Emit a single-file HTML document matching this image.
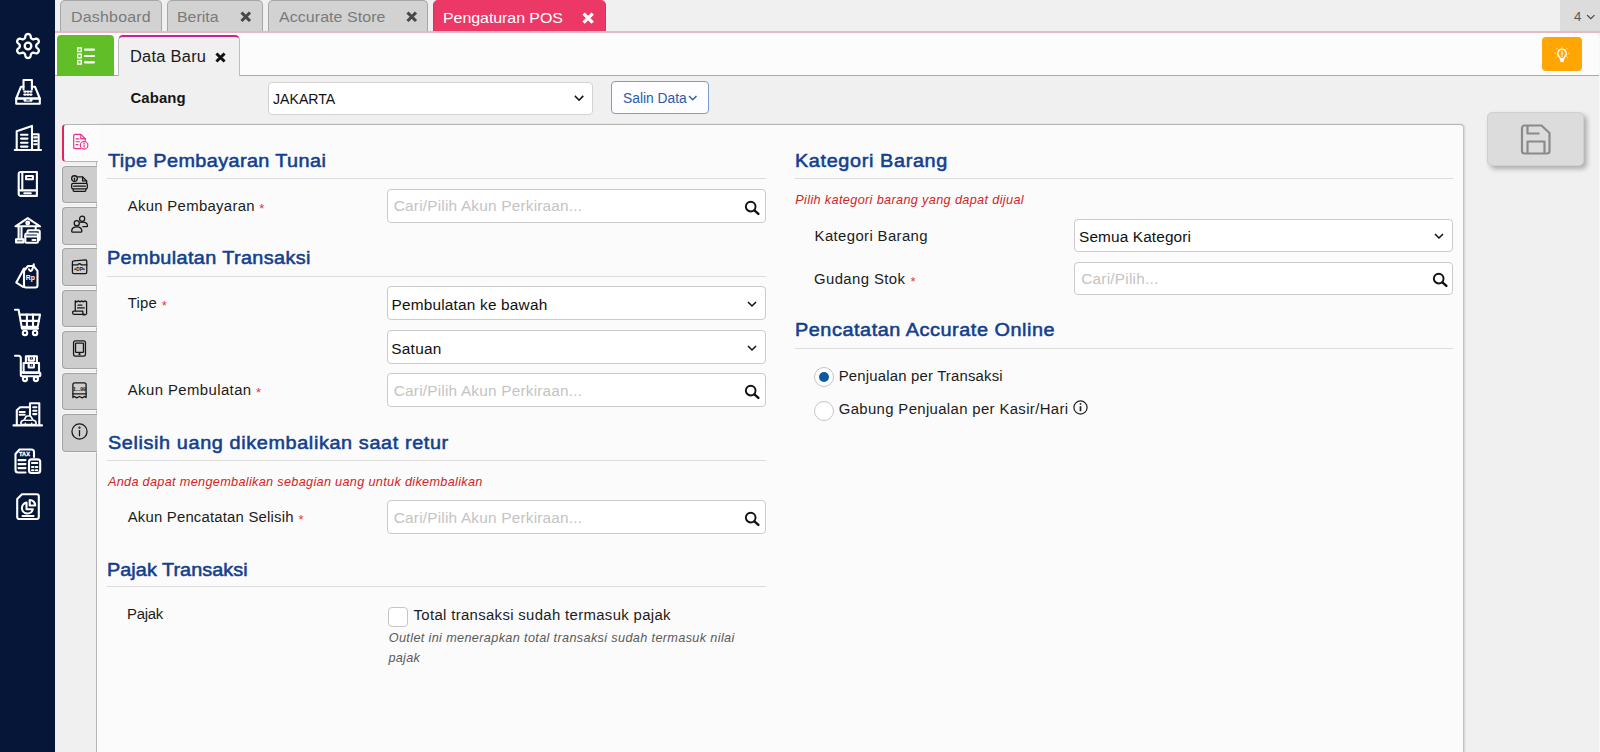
<!DOCTYPE html><html lang="id"><head><meta charset="utf-8"><title>Pengaturan POS</title><style>
*{box-sizing:border-box;margin:0;padding:0}
html,body{width:1600px;height:752px;overflow:hidden;background:#f0f0f0;font-family:"Liberation Sans",sans-serif}
.a{position:absolute}
.t{position:absolute;white-space:nowrap;line-height:1;font-family:"Liberation Sans",sans-serif}
#side{left:0;top:0;width:55px;height:752px;background:#051639}
#side svg{position:absolute;left:14px;width:28px;height:28px;overflow:visible}
#topbar{left:55px;top:0;width:1545px;height:32px;background:#f0f0f0}
.tab{position:absolute;top:0;height:32px;background:#d1d2d1;border:1px solid #a6a6a6;border-bottom:none;border-radius:5px 5px 0 0}
.tab.act{background:#ec3867;border-color:#d8335f;border-top-color:#ec3867}
#pinkline{left:55px;top:31.4px;width:1545px;height:1.4px;background:#e3bbc5}
#white{left:55px;top:33px;width:1543.5px;height:43px;background:#fcfcfc;border-bottom:1px solid #a9a9a9;border-radius:0 5px 0 0}
#rstrip{left:1598.5px;top:36px;width:1.5px;height:716px;background:#f7f7f7}
#green{left:57px;top:35px;width:57px;height:41px;background:#61be29;border-radius:4px 4px 0 0}
#dtab{left:118px;top:35px;width:122px;height:41px;background:#f0f0f0;border:1px solid #bdbdbd;border-bottom:none;border-top:2px solid #c8238a;border-radius:5px 5px 0 0}
#bulb{left:1542px;top:37px;width:40px;height:34px;background:#ffa604;border-radius:4px}
#four{left:1560px;top:0;width:40px;height:31px;background:#dcdcdc}
.inp{position:absolute;background:#fff;border:1px solid #cbcbcb;border-radius:4px}
.hr{position:absolute;height:1px;background:#dcdcdc}
#panel{left:96px;top:124px;width:1368px;height:640px;background:#fbfbfb;border:1px solid #b5b5b5;border-right-color:#c2c2c2;border-radius:0 4px 0 0;box-shadow:1px 0 2px rgba(0,0,0,.13)}
.vt{position:absolute;left:62px;width:35px;height:38px;background:#cccdcc;border:1px solid #a3a3a3;box-shadow:0 0 0 1px rgba(255,255,255,.45);border-right:none;border-radius:4px 0 0 4px}
.vt.act{background:#fcfcfc;box-shadow:none;border-color:#b5b5b5;border-left:2px solid #e0245e;width:36px}
.vt svg{position:absolute;left:8px;top:8.2px;width:17px;height:17px;overflow:visible}
#save{left:1487px;top:112px;width:97px;height:54px;background:#dcdcdc;border:1px solid #cfcfcf;border-radius:5px;box-shadow:3px 3px 5px rgba(0,0,0,.28)}
.ast{position:absolute;color:#e53935;font-size:13px;line-height:1;font-family:"Liberation Sans",sans-serif}
.chk{position:absolute;background:#fff;border:1px solid #c6c6c6}
</style></head><body>
<nav id="side" class="a">
<svg style="top:32px" viewBox="0 0 28 28"><path d="M14.00 2.00 L14.78 2.07 L15.54 2.33 L16.19 2.99 L16.61 4.24 L16.88 5.50 L17.22 6.21 L17.65 6.61 L18.10 6.90 L18.58 7.15 L19.13 7.31 L19.92 7.25 L21.14 6.86 L22.44 6.60 L23.34 6.83 L23.94 7.36 L24.39 8.00 L24.72 8.71 L24.88 9.49 L24.63 10.39 L23.76 11.39 L22.80 12.25 L22.36 12.90 L22.22 13.46 L22.20 14.00 L22.22 14.54 L22.36 15.10 L22.80 15.75 L23.76 16.61 L24.63 17.61 L24.88 18.51 L24.72 19.29 L24.39 20.00 L23.94 20.64 L23.34 21.17 L22.44 21.40 L21.14 21.14 L19.92 20.75 L19.13 20.69 L18.58 20.85 L18.10 21.10 L17.65 21.39 L17.22 21.79 L16.88 22.50 L16.61 23.76 L16.19 25.01 L15.54 25.67 L14.78 25.93 L14.00 26.00 L13.22 25.93 L12.46 25.67 L11.81 25.01 L11.39 23.76 L11.12 22.50 L10.78 21.79 L10.35 21.39 L9.90 21.10 L9.42 20.85 L8.87 20.69 L8.08 20.75 L6.86 21.14 L5.56 21.40 L4.66 21.17 L4.06 20.64 L3.61 20.00 L3.28 19.29 L3.12 18.51 L3.37 17.61 L4.24 16.61 L5.20 15.75 L5.64 15.10 L5.78 14.54 L5.80 14.00 L5.78 13.46 L5.64 12.90 L5.20 12.25 L4.24 11.39 L3.37 10.39 L3.12 9.49 L3.28 8.71 L3.61 8.00 L4.06 7.36 L4.66 6.83 L5.56 6.60 L6.86 6.86 L8.08 7.25 L8.87 7.31 L9.42 7.15 L9.90 6.90 L10.35 6.61 L10.78 6.21 L11.12 5.50 L11.39 4.24 L11.81 2.99 L12.46 2.33 L13.22 2.07Z" fill="none" stroke="#fff" stroke-width="2.3" stroke-linecap="round" stroke-linejoin="round"/><circle cx="14" cy="14" r="3.3" fill="none" stroke="#fff" stroke-width="2.3" stroke-linecap="round" stroke-linejoin="round"/></svg>
<svg style="top:78px" viewBox="0 0 28 28"><path d="M9.500 11.500V2h8.400v9.500" fill="none" stroke="#fff" stroke-width="2.1" stroke-linecap="round" stroke-linejoin="round"/><path d="M9.500 8.700H7L2.200 20.500h23.600L21 8.700h-3.100" fill="none" stroke="#fff" stroke-width="2.1" stroke-linecap="round" stroke-linejoin="round"/><path d="M2.200 20.500h23.600v5.200H2.200z" fill="none" stroke="#fff" stroke-width="2.1" stroke-linecap="round" stroke-linejoin="round"/><path d="M10 20.500h8v2.600h-8z" fill="#fff" stroke="#fff" stroke-width="1"/><path d="M12.300 22h3.400" stroke="#051639" stroke-width="1"/><path d="M10.300 13.600h1.200M13.300 13.600h1.200M16.300 13.600h1.200M10.300 16.600h1.200M13.300 16.600h1.200M16.300 16.600h1.200" fill="none" stroke="#fff" stroke-width="2.1" stroke-linecap="round" stroke-linejoin="round" stroke-width="1.700" stroke-linecap="butt"/></svg>
<svg style="top:124px" viewBox="0 0 28 28"><path d="M2.700 25.500V7.300L18 1.900v23.600" fill="none" stroke="#fff" stroke-width="2.1" stroke-linecap="round" stroke-linejoin="round"/><path d="M18 10.300h6.600v15.200" fill="none" stroke="#fff" stroke-width="2.1" stroke-linecap="round" stroke-linejoin="round"/><path d="M.7 26h26.300" fill="none" stroke="#fff" stroke-width="2.1" stroke-linecap="round" stroke-linejoin="round"/><path d="M7 10.800h6.500M7 14.600h6.500M7 18.800h6.500M7 22.600h6.500" fill="none" stroke="#fff" stroke-width="2.1" stroke-linecap="round" stroke-linejoin="round" stroke-linecap="butt"/><path d="M20.200 13.400h2.600M20.200 16.900h2.600M20.200 20.300h2.600" fill="none" stroke="#fff" stroke-width="2.1" stroke-linecap="round" stroke-linejoin="round" stroke-width="1.800" stroke-linecap="butt"/></svg>
<svg style="top:170px" viewBox="0 0 28 28"><path d="M6.700 2H22.900V25.900H6.700a2 2 0 0 1-2-2V4a2 2 0 0 1 2-2z" fill="none" stroke="#fff" stroke-width="2.1" stroke-linecap="round" stroke-linejoin="round"/><path d="M8.300 2v18.300" fill="none" stroke="#fff" stroke-width="2.1" stroke-linecap="round" stroke-linejoin="round"/><path d="M4.900 20.400h18" fill="none" stroke="#fff" stroke-width="2.1" stroke-linecap="round" stroke-linejoin="round"/><path d="M12.100 6h6.800v3.300h-6.800z" fill="none" stroke="#fff" stroke-width="2.1" stroke-linecap="round" stroke-linejoin="round" stroke-width="1.800"/><path d="M10.300 23.300h6.500" fill="none" stroke="#fff" stroke-width="2.1" stroke-linecap="round" stroke-linejoin="round" stroke-width="1.400" stroke-linecap="butt"/></svg>
<svg style="top:216px" viewBox="0 0 28 28"><path d="M1.500 10.300L13.700 2.200l12.300 8.100z" fill="none" stroke="#fff" stroke-width="2.1" stroke-linecap="round" stroke-linejoin="round"/><circle cx="13.700" cy="7" r="1.400" fill="none" stroke="#fff" stroke-width="2.1" stroke-linecap="round" stroke-linejoin="round" stroke-width="1.600"/><path d="M4.600 11.500v11M7.500 11.500v11" fill="none" stroke="#fff" stroke-width="2.1" stroke-linecap="round" stroke-linejoin="round"/><path d="M2 23.400h7.500v3H2z" fill="none" stroke="#fff" stroke-width="2.1" stroke-linecap="round" stroke-linejoin="round" stroke-width="1.700"/><path d="M21.700 11.500v2" fill="none" stroke="#fff" stroke-width="2.1" stroke-linecap="round" stroke-linejoin="round"/><path d="M13.500 17v-1.500a1.200 1.200 0 0 1 1.200-1.200h9.800a1.200 1.200 0 0 1 1.200 1.200v7.500a1.200 1.200 0 0 1-1.200 1.200" fill="none" stroke="#fff" stroke-width="2.1" stroke-linecap="round" stroke-linejoin="round" stroke-width="1.800"/><rect x="11.300" y="17.500" width="12.700" height="9.300" rx="1.300" fill="none" stroke="#fff" stroke-width="2.1" stroke-linecap="round" stroke-linejoin="round" stroke-width="1.900"/><path d="M11.300 20.500h12.700" fill="none" stroke="#fff" stroke-width="2.1" stroke-linecap="round" stroke-linejoin="round" stroke-width="1.800"/><path d="M18.500 24h3" fill="none" stroke="#fff" stroke-width="2.1" stroke-linecap="round" stroke-linejoin="round" stroke-width="1.500" stroke-linecap="butt"/></svg>
<svg style="top:262px" viewBox="0 0 28 28"><path d="M10 6.500L2.300 20.600l6.800 4.200" fill="none" stroke="#fff" stroke-width="2.1" stroke-linecap="round" stroke-linejoin="round"/><path d="M10 8.800L14 4h5.500l4 4.800v14.700a2 2 0 0 1-2 2H12a2 2 0 0 1-2-2z" fill="none" stroke="#fff" stroke-width="2.1" stroke-linecap="round" stroke-linejoin="round"/><path d="M15 7.300c.8 2 2.400 2 3.200.3.800-1.700 1.300-3.600 1.600-5.300" fill="none" stroke="#fff" stroke-width="2.1" stroke-linecap="round" stroke-linejoin="round" stroke-width="1.600"/><text x="16.300" y="18.300" text-anchor="middle" font-family="Liberation Sans, sans-serif" font-weight="700" font-size="6.800" fill="#fff">Rp</text></svg>
<svg style="top:308px" viewBox="0 0 28 28"><path d="M1 1.700h3.600L8 20.600h16" fill="none" stroke="#fff" stroke-width="2.1" stroke-linecap="round" stroke-linejoin="round"/><path d="M5.700 6.600H26l-2.300 12.300H8" fill="none" stroke="#fff" stroke-width="2.1" stroke-linecap="round" stroke-linejoin="round"/><path d="M12.900 6.600v12M19 6.600v12M6.800 12.900h18" fill="none" stroke="#fff" stroke-width="2.1" stroke-linecap="round" stroke-linejoin="round"/><circle cx="11" cy="24.900" r="2.200" fill="none" stroke="#fff" stroke-width="2.1" stroke-linecap="round" stroke-linejoin="round"/><circle cx="21.100" cy="24.900" r="2.200" fill="none" stroke="#fff" stroke-width="2.1" stroke-linecap="round" stroke-linejoin="round"/></svg>
<svg style="top:354px" viewBox="0 0 28 28"><path d="M1 1.700h3.300a2.500 2.500 0 0 1 2.500 2.500v14.400" fill="none" stroke="#fff" stroke-width="2.1" stroke-linecap="round" stroke-linejoin="round"/><rect x="6.800" y="18.600" width="19.500" height="3.700" rx="1" fill="none" stroke="#fff" stroke-width="2.1" stroke-linecap="round" stroke-linejoin="round"/><circle cx="11" cy="25" r="2.100" fill="none" stroke="#fff" stroke-width="2.1" stroke-linecap="round" stroke-linejoin="round"/><circle cx="21.900" cy="25" r="2.100" fill="none" stroke="#fff" stroke-width="2.1" stroke-linecap="round" stroke-linejoin="round"/><path d="M11.900 9V2.300h11V9" fill="none" stroke="#fff" stroke-width="2.1" stroke-linecap="round" stroke-linejoin="round"/><rect x="9.600" y="9" width="15.400" height="9.600" fill="none" stroke="#fff" stroke-width="2.1" stroke-linecap="round" stroke-linejoin="round"/><path d="M14.700 2.300v4.300h5.200V2.300M14.700 9v4.500h5.200V9" fill="none" stroke="#fff" stroke-width="2.1" stroke-linecap="round" stroke-linejoin="round" stroke-width="1.700"/><circle cx="17.300" cy="4.200" r=".6" fill="#fff"/><circle cx="17.300" cy="11.200" r=".6" fill="#fff"/></svg>
<svg style="top:400px" viewBox="0 0 28 28"><path d="M2.800 25V10.200l3.300-2.900h9.900" fill="none" stroke="#fff" stroke-width="2.1" stroke-linecap="round" stroke-linejoin="round"/><path d="M16 25V3.300h9.300V25" fill="none" stroke="#fff" stroke-width="2.1" stroke-linecap="round" stroke-linejoin="round"/><path d="M-.5 25.400h28.500" fill="none" stroke="#fff" stroke-width="2.1" stroke-linecap="round" stroke-linejoin="round"/><path d="M19.200 7.300h3.200M19.200 10.800h3.200M19.200 14.100h3.200" fill="none" stroke="#fff" stroke-width="2.1" stroke-linecap="round" stroke-linejoin="round" stroke-width="1.700" stroke-linecap="butt"/><path d="M5.700 12h5M5.700 14.800h5" fill="none" stroke="#fff" stroke-width="2.1" stroke-linecap="round" stroke-linejoin="round" stroke-width="1.700" stroke-linecap="butt"/><path d="M7.600 24.500c-1-.5-1-2.800.6-3.700l2-.8 1.800-3.300c.3-.5.800-.7 1.300-.7h2.400c.5 0 1 .2 1.300.7l1.800 3.300 2 .8c1.600.9 1.600 3.200.6 3.700z" fill="#051639" stroke="#fff" stroke-width="1.700" stroke-linejoin="round"/><path d="M11 20.300h7" stroke="#fff" stroke-width="1.300"/><circle cx="11.300" cy="23.300" r=".8" fill="#fff"/><circle cx="17.700" cy="23.300" r=".8" fill="#fff"/></svg>
<svg style="top:446px" viewBox="0 0 28 28"><path d="M11.500 26.500H4a2.500 2.500 0 0 1-2.500-2.500V8L5.500 3.500H17.500a2.500 2.500 0 0 1 2.500 2.500v5" fill="none" stroke="#fff" stroke-width="2.1" stroke-linecap="round" stroke-linejoin="round"/><path d="M4.500 14.100h7M4.500 18.100h7M4.500 22.100h7" fill="none" stroke="#fff" stroke-width="2.1" stroke-linecap="round" stroke-linejoin="round" stroke-linecap="butt"/><rect x="15" y="13.400" width="11.200" height="13.600" rx="2.500" fill="none" stroke="#fff" stroke-width="2.1" stroke-linecap="round" stroke-linejoin="round"/><path d="M18 17h5.300" fill="none" stroke="#fff" stroke-width="2.1" stroke-linecap="round" stroke-linejoin="round" stroke-width="1.700" stroke-linecap="butt"/><path d="M18 21h1.500M21.800 21h1.500M18 24.200h1.500M21.800 24.200h1.500" fill="none" stroke="#fff" stroke-width="2.1" stroke-linecap="round" stroke-linejoin="round" stroke-width="1.600" stroke-linecap="butt"/><text x="10.500" y="10.300" text-anchor="middle" font-family="Liberation Sans, sans-serif" font-weight="700" font-size="5.600" fill="#fff" stroke="#fff" stroke-width=".3">TAX</text></svg>
<svg style="top:493px" viewBox="0 0 28 28"><path d="M3.200 6L8 1.300h14.800a2 2 0 0 1 2 2V24a2 2 0 0 1-2 2H5.200a2 2 0 0 1-2-2z" fill="none" stroke="#fff" stroke-width="2.1" stroke-linecap="round" stroke-linejoin="round"/><path d="M12.500 9.600a5.500 5.500 0 1 0 6.300 6.600h-6.300z" fill="none" stroke="#fff" stroke-width="2.1" stroke-linecap="round" stroke-linejoin="round"/><path d="M15.700 7a5.500 5.500 0 0 1 5.500 5.500h-5.500z" fill="none" stroke="#fff" stroke-width="2.1" stroke-linecap="round" stroke-linejoin="round" stroke-width="1.800"/><path d="M8.500 23h11" fill="none" stroke="#fff" stroke-width="2.1" stroke-linecap="round" stroke-linejoin="round" stroke-width="1.700" stroke-linecap="butt"/></svg>
</nav>
<div id="topbar" class="a"></div>
<div id="four" class="a"></div>
<div class="tab" style="left:60px;width:102px"></div>
<div class="tab" style="left:167px;width:96px"></div>
<div class="tab" style="left:268px;width:160px"></div>
<div class="tab act" style="left:433px;width:173px"></div>
<div id="pinkline" class="a"></div>
<div id="white" class="a"></div><div id="rstrip" class="a"></div>
<svg class="a" style="left:239.8px;top:11.3px;width:11.5px;height:11.5px;overflow:visible" viewBox="0 0 10 10"><path d="M1.300 1.300L8.700 8.700M8.700 1.300L1.300 8.700" stroke="#484848" stroke-width="2.700" stroke-linecap="butt"/></svg>
<svg class="a" style="left:405.5px;top:11.3px;width:11.5px;height:11.5px;overflow:visible" viewBox="0 0 10 10"><path d="M1.300 1.300L8.700 8.700M8.700 1.300L1.300 8.700" stroke="#484848" stroke-width="2.700" stroke-linecap="butt"/></svg>
<svg class="a" style="left:582.3px;top:11.5px;width:12.3px;height:12.3px;overflow:visible" viewBox="0 0 10 10"><path d="M1.300 1.300L8.700 8.700M8.700 1.300L1.300 8.700" stroke="#fff" stroke-width="2.700" stroke-linecap="butt"/></svg>
<svg class="a" style="left:1587.4px;top:15px;width:7.6px;height:4.3px;overflow:visible" viewBox="0 0 7.6 4.3"><path d="M.5 .5L3.8 3.5999999999999996L7.1 .5" fill="none" stroke="#444" stroke-width="1.15" stroke-linecap="square" stroke-linejoin="miter"/></svg>
<div id="green" class="a"><svg class="a" style="left:20px;top:12px;width:19px;height:18px" viewBox="0 0 19 18"><g fill="none" stroke="#fff" stroke-width="1.400"><rect x=".7" y=".9" width="3.600" height="3.600"/><rect x=".7" y="7.200" width="3.600" height="3.600"/><rect x=".7" y="13.500" width="3.600" height="3.600"/></g><g stroke="#fff" stroke-width="2.200" stroke-linecap="round"><path d="M8 2.700h9M8 9h9M8 15.300h9"/></g></svg></div>
<div id="dtab" class="a"></div>
<svg class="a" style="left:214.8px;top:51.8px;width:11px;height:11px;overflow:visible" viewBox="0 0 10 10"><path d="M1.300 1.300L8.700 8.700M8.700 1.300L1.300 8.700" stroke="#111" stroke-width="2.700" stroke-linecap="butt"/></svg>
<div id="bulb" class="a"><svg class="a" style="left:12px;top:9px;width:16px;height:18px;overflow:visible" viewBox="0 0 16 18"><path d="M8 3.200a4.300 4.300 0 0 0-2.600 7.700c.6.500.9 1 .9 1.700h3.400c0-.7.300-1.200.9-1.700A4.300 4.300 0 0 0 8 3.200z" fill="none" stroke="#fff" stroke-width="1.300"/><path d="M6.200 13.400h3.600l-.6 2.300H6.800z" fill="#fff" stroke="#fff" stroke-width=".8" stroke-linejoin="round"/><path d="M8 5.500v3.200" stroke="#fff" stroke-width="1.200" stroke-linecap="round"/><circle cx="8" cy="10.300" r=".7" fill="#fff"/><g stroke="#ffe0a0" stroke-width=".9" stroke-linecap="round"><path d="M8 .3v1.200M2.600 2.300l.9.900M13.400 2.300l-.9.900M.6 7.300h1.200M14.200 7.300h1.200M2.300 11.500l.9-.6M13.700 11.500l-.9-.6"/></g></svg></div>
<div class="inp" style="left:268px;top:81.500px;width:324.500px;height:33px;border-color:#d3d3d3"></div>
<svg class="a" style="left:575px;top:96.2px;width:8.2px;height:4.9px;overflow:visible" viewBox="0 0 8.2 4.9"><path d="M.5 .5L4.1 4.2L7.699999999999999 .5" fill="none" stroke="#111" stroke-width="1.6" stroke-linecap="square" stroke-linejoin="miter"/></svg>
<div class="inp" style="left:611px;top:81px;width:98px;height:33px;border-color:#7f9bc8;background:#fdfdff"></div>
<svg class="a" style="left:689px;top:95.5px;width:7.5px;height:4.5px;overflow:visible" viewBox="0 0 7.5 4.5"><path d="M.5 .5L3.75 3.8L7.0 .5" fill="none" stroke="#2b5ca8" stroke-width="1.4" stroke-linecap="square" stroke-linejoin="miter"/></svg>
<div id="panel" class="a"></div>
<div class="vt act" style="top:124px"><svg viewBox="0 0 18 18" style="left:8px;top:8px;width:17px;height:17px"><path d="M9 16.500H3.300a1.500 1.500 0 0 1-1.500-1.500V3a1.500 1.500 0 0 1 1.500-1.500h6.200L14 6v2.500" fill="none" stroke="#e8308a" stroke-width="1.25" stroke-linecap="round" stroke-linejoin="round"/><path d="M9.300 1.800V6H14" fill="none" stroke="#e8308a" stroke-width="1.25" stroke-linecap="round" stroke-linejoin="round"/><path d="M4.300 6.200h3M4.300 9.300h3.500M4.300 12.400h2" fill="none" stroke="#e8308a" stroke-width="1.25" stroke-linecap="round" stroke-linejoin="round"/><circle cx="12.800" cy="13" r="4" fill="none" stroke="#e8308a" stroke-width="1.25" stroke-linecap="round" stroke-linejoin="round"/><path d="M12.800 12.600v2.300" fill="none" stroke="#e8308a" stroke-width="1.25" stroke-linecap="round" stroke-linejoin="round"/><circle cx="12.800" cy="10.900" r="0.300" fill="none" stroke="#e8308a" stroke-width="1.25" stroke-linecap="round" stroke-linejoin="round"/></svg></div>
<div class="vt" style="top:165.5px;height:37.500px"><svg viewBox="0 0 18 18"><path d="M7.300 2H12.300L16.600 6.300V8.800" fill="none" stroke="#161616" stroke-width="1.35" stroke-linecap="round" stroke-linejoin="round"/><path d="M12.300 2.200V6.300H16.400" fill="none" stroke="#161616" stroke-width="1.35" stroke-linecap="round" stroke-linejoin="round"/><circle cx="3.700" cy="3.800" r="3" fill="none" stroke="#161616" stroke-width="1.35" stroke-linecap="round" stroke-linejoin="round"/><path d="M3.700 3.400v2" fill="none" stroke="#161616" stroke-width="1.35" stroke-linecap="round" stroke-linejoin="round" stroke-width="1.100"/><rect x=".7" y="8.900" width="16.600" height="5.800" rx="1.500" fill="none" stroke="#161616" stroke-width="1.35" stroke-linecap="round" stroke-linejoin="round"/><path d="M2.800 11.800h12.400" fill="none" stroke="#161616" stroke-width="1.35" stroke-linecap="round" stroke-linejoin="round" stroke-width="1.700" stroke-linecap="butt"/><path d="M2.300 15v1.500a.9.900 0 0 0 .9.900H14.800a.9.900 0 0 0 .9-.9V15" fill="none" stroke="#161616" stroke-width="1.35" stroke-linecap="round" stroke-linejoin="round"/></svg></div>
<div class="vt" style="top:207px;height:37.500px"><svg viewBox="0 0 18 18"><circle cx="11.800" cy="2.900" r="2.700" fill="none" stroke="#161616" stroke-width="1.35" stroke-linecap="round" stroke-linejoin="round"/><path d="M10.300 6.900c4-1.400 7.200.6 7.200 3.600a.8.800 0 0 1-.8.800h-4.200" fill="none" stroke="#161616" stroke-width="1.35" stroke-linecap="round" stroke-linejoin="round"/><circle cx="6.100" cy="7.600" r="2.700" fill="none" stroke="#161616" stroke-width="1.35" stroke-linecap="round" stroke-linejoin="round"/><path d="M.7 16.200c0-2.900 2.300-4.700 5.400-4.700s5.400 1.800 5.400 4.700a.8.800 0 0 1-.8.800H1.500a.8.800 0 0 1-.8-.8z" fill="none" stroke="#161616" stroke-width="1.35" stroke-linecap="round" stroke-linejoin="round"/></svg></div>
<div class="vt" style="top:248.4px;height:37.500px"><svg viewBox="0 0 18 18"><path d="M1.500 4.500a1.500 1.500 0 0 1 1.500-1.500L15.500 2a1.200 1.200 0 0 1 1.200 1.200V15a1.500 1.500 0 0 1-1.500 1.500H3A1.500 1.500 0 0 1 1.500 15z" fill="none" stroke="#161616" stroke-width="1.35" stroke-linecap="round" stroke-linejoin="round"/><path d="M1.500 7.300h5.700c.3-1.600 3.300-1.600 3.600 0h5.900" fill="none" stroke="#161616" stroke-width="1.35" stroke-linecap="round" stroke-linejoin="round"/><path d="M4 11.800h1.200M12.800 11.800H14" fill="none" stroke="#161616" stroke-width="1.35" stroke-linecap="round" stroke-linejoin="round" stroke-width="1.800"/><text x="9" y="13.700" text-anchor="middle" font-family="Liberation Sans, sans-serif" font-weight="700" font-size="5" fill="#161616">DP</text></svg></div>
<div class="vt" style="top:289.9px;height:37.500px"><svg viewBox="0 0 18 18"><path d="M4.500 12.500V2l1.700 1 1.700-1 1.700 1 1.700-1 1.700 1 1.700-1 1.800 1v12a1.800 1.800 0 0 1-1.800 1.800h-2" fill="none" stroke="#161616" stroke-width="1.35" stroke-linecap="round" stroke-linejoin="round"/><path d="M7.500 6.500h4M7 9.500h7" fill="none" stroke="#161616" stroke-width="1.35" stroke-linecap="round" stroke-linejoin="round"/><path d="M2.800 12.800h9.700v1.700a1.800 1.800 0 0 0 1.800 1.800H3.500a1.800 1.800 0 0 1-1.800-1.800v-.6a1.100 1.100 0 0 1 1.100-1.100z" fill="none" stroke="#161616" stroke-width="1.35" stroke-linecap="round" stroke-linejoin="round"/></svg></div>
<div class="vt" style="top:331.3px;height:37.500px"><svg viewBox="0 0 18 18"><rect x="2.700" y="1" width="12.600" height="16" rx="2" fill="none" stroke="#161616" stroke-width="1.35" stroke-linecap="round" stroke-linejoin="round"/><rect x="4.800" y="3.200" width="8.400" height="9.800" rx=".6" fill="none" stroke="#161616" stroke-width="1.35" stroke-linecap="round" stroke-linejoin="round"/><circle cx="9" cy="15" r=".5" fill="none" stroke="#161616" stroke-width="1.35" stroke-linecap="round" stroke-linejoin="round"/></svg></div>
<div class="vt" style="top:372.8px;height:37.500px"><svg viewBox="0 0 18 18"><path d="M2 16.500V3a2 2 0 0 1 2-2h10a2 2 0 0 1 2 2v13.500l-1.700-1.200-2.400 1.500-2.900-1.500-2.900 1.500-2.400-1.500z" fill="none" stroke="#161616" stroke-width="1.35" stroke-linecap="round" stroke-linejoin="round"/><path d="M2 12.500h14" fill="none" stroke="#161616" stroke-width="1.35" stroke-linecap="round" stroke-linejoin="round" stroke-width="1.800"/><text x="9" y="9.800" text-anchor="middle" font-family="Liberation Sans, sans-serif" font-weight="700" font-size="5.500" fill="#161616">1...99</text></svg></div>
<div class="vt" style="top:414.2px;height:37.500px"><svg viewBox="0 0 18 18"><circle cx="9" cy="9" r="8" fill="none" stroke="#161616" stroke-width="1.35" stroke-linecap="round" stroke-linejoin="round"/><path d="M9 8v5.500" fill="none" stroke="#161616" stroke-width="1.35" stroke-linecap="round" stroke-linejoin="round"/><circle cx="9" cy="5" r=".5" fill="none" stroke="#161616" stroke-width="1.35" stroke-linecap="round" stroke-linejoin="round" fill="#161616"/></svg></div>
<div id="save" class="a"><svg class="a" style="left:32px;top:11px;width:31px;height:31px" viewBox="0 0 31 31"><g fill="none" stroke="#8a8a8a" stroke-width="2.200" stroke-linejoin="round"><path d="M4.500 1.500h17l8 7.500v18a2.500 2.500 0 0 1-2.500 2.500h-22.500a2.500 2.500 0 0 1-2.500-2.500v-23a2.500 2.500 0 0 1 2.500-2.500z"/><path d="M7.500 1.500v8h12"/><path d="M7.500 29.500v-12h17v12"/></g></svg></div>
<div class="hr" style="left:107px;top:178px;width:659px"></div>
<div class="hr" style="left:107px;top:275.5px;width:659px"></div>
<div class="hr" style="left:107px;top:460px;width:659px"></div>
<div class="hr" style="left:107px;top:586.3px;width:659px"></div>
<div class="hr" style="left:795px;top:178px;width:658px"></div>
<div class="hr" style="left:795px;top:348.2px;width:658px"></div>
<div class="inp" style="left:387px;top:188.5px;width:379px;height:34px"></div>
<div class="inp" style="left:387px;top:286px;width:379px;height:34.3px"></div>
<div class="inp" style="left:387px;top:330px;width:379px;height:33.7px"></div>
<div class="inp" style="left:387px;top:373.1px;width:379px;height:33.8px"></div>
<div class="inp" style="left:387px;top:500px;width:379px;height:34px"></div>
<div class="inp" style="left:1074px;top:218.5px;width:379px;height:33px"></div>
<div class="inp" style="left:1074px;top:262px;width:379px;height:33.4px"></div>
<svg class="a" style="left:745px;top:200.5px;width:14px;height:14px;overflow:visible" viewBox="0 0 14 14"><circle cx="5.700" cy="5.600" r="4.850" fill="none" stroke="#111" stroke-width="1.900"/><path d="M9.400 9.300L13.400 12.900" stroke="#111" stroke-width="2.400" stroke-linecap="round"/></svg>
<svg class="a" style="left:745px;top:385px;width:14px;height:14px;overflow:visible" viewBox="0 0 14 14"><circle cx="5.700" cy="5.600" r="4.850" fill="none" stroke="#111" stroke-width="1.900"/><path d="M9.400 9.300L13.400 12.900" stroke="#111" stroke-width="2.400" stroke-linecap="round"/></svg>
<svg class="a" style="left:745px;top:511.7px;width:14px;height:14px;overflow:visible" viewBox="0 0 14 14"><circle cx="5.700" cy="5.600" r="4.850" fill="none" stroke="#111" stroke-width="1.900"/><path d="M9.400 9.300L13.400 12.900" stroke="#111" stroke-width="2.400" stroke-linecap="round"/></svg>
<svg class="a" style="left:1432.5px;top:273px;width:14px;height:14px;overflow:visible" viewBox="0 0 14 14"><circle cx="5.700" cy="5.600" r="4.850" fill="none" stroke="#111" stroke-width="1.900"/><path d="M9.400 9.300L13.400 12.900" stroke="#111" stroke-width="2.400" stroke-linecap="round"/></svg>
<svg class="a" style="left:747.6px;top:302px;width:8px;height:4.7px;overflow:visible" viewBox="0 0 8 4.7"><path d="M.5 .5L4.0 4.0L7.5 .5" fill="none" stroke="#111" stroke-width="1.5" stroke-linecap="square" stroke-linejoin="miter"/></svg>
<svg class="a" style="left:747.6px;top:345.6px;width:8px;height:4.7px;overflow:visible" viewBox="0 0 8 4.7"><path d="M.5 .5L4.0 4.0L7.5 .5" fill="none" stroke="#111" stroke-width="1.5" stroke-linecap="square" stroke-linejoin="miter"/></svg>
<svg class="a" style="left:1435.1px;top:234.2px;width:8px;height:4.7px;overflow:visible" viewBox="0 0 8 4.7"><path d="M.5 .5L4.0 4.0L7.5 .5" fill="none" stroke="#111" stroke-width="1.5" stroke-linecap="square" stroke-linejoin="miter"/></svg>
<div class="chk" style="left:388px;top:607px;width:19.500px;height:19.500px;border-radius:4px"></div>
<div class="chk" style="left:814px;top:367.100px;width:20px;height:20px;border-radius:50%"></div>
<div class="a" style="left:818.700px;top:371.900px;width:10.600px;height:10.600px;border-radius:50%;background:#0c59a6"></div>
<div class="chk" style="left:814px;top:401.200px;width:20px;height:20px;border-radius:50%"></div>
<svg class="a" style="left:1073.400px;top:400.400px;width:15px;height:15px;overflow:visible" viewBox="0 0 15 15"><circle cx="7.500" cy="7.500" r="6.600" fill="none" stroke="#222" stroke-width="1.250"/><path d="M7.500 6.200v5" stroke="#222" stroke-width="1.700" stroke-linecap="butt"/><circle cx="7.500" cy="3.900" r=".95" fill="#222"/></svg>
<span class="ast" style="left:259.2px;top:201.5px">*</span>
<span class="ast" style="left:161.8px;top:299px">*</span>
<span class="ast" style="left:256px;top:385.5px">*</span>
<span class="ast" style="left:298.5px;top:512.5px">*</span>
<span class="ast" style="left:910.4px;top:274.5px">*</span>
<span class="t" style="left:70.86px;top:8.99px;font-size:15.3px;letter-spacing:0.226px;color:#7a7a7a;font-weight:400;font-style:normal;transform:scaleX(1.04);transform-origin:0 0;">Dashboard</span>
<span class="t" style="left:177.46px;top:8.99px;font-size:15.3px;letter-spacing:-0.012px;color:#7a7a7a;font-weight:400;font-style:normal;transform:scaleX(1.04);transform-origin:0 0;">Berita</span>
<span class="t" style="left:278.75px;top:8.99px;font-size:15.3px;letter-spacing:0.089px;color:#7a7a7a;font-weight:400;font-style:normal;transform:scaleX(1.04);transform-origin:0 0;">Accurate Store</span>
<span class="t" style="left:442.72px;top:9.83px;font-size:15.5px;letter-spacing:-0.055px;color:#ffffff;font-weight:400;font-style:normal;transform:scaleX(1.03);transform-origin:0 0;">Pengaturan POS</span>
<span class="t" style="left:1574.00px;top:9.78px;font-size:13.2px;letter-spacing:0px;color:#555;font-weight:400;font-style:normal;">4</span>
<span class="t" style="left:129.56px;top:48.57px;font-size:15.8px;letter-spacing:0.245px;color:#1a1a1a;font-weight:400;font-style:normal;transform:scaleX(1.04);transform-origin:0 0;">Data Baru</span>
<span class="t" style="left:130.50px;top:91.34px;font-size:14.9px;letter-spacing:0.1px;color:#151515;font-weight:700;font-style:normal;">Cabang</span>
<span class="t" style="left:272.60px;top:90.91px;font-size:15.4px;letter-spacing:0px;color:#111;font-weight:400;font-style:normal;transform:scaleX(0.9176);transform-origin:0 0;">JAKARTA</span>
<span class="t" style="left:623.47px;top:91.34px;font-size:14.9px;letter-spacing:0px;color:#2b5ca8;font-weight:400;font-style:normal;transform:scaleX(0.9279);transform-origin:0 0;">Salin Data</span>
<h2 class="t" style="left:108.10px;top:151.94px;font-size:18.9px;letter-spacing:0.379px;color:#123f8e;font-weight:400;font-style:normal;-webkit-text-stroke:0.55px #123f8e;transform:scaleX(1.05);transform-origin:0 0;">Tipe Pembayaran Tunai</h2>
<h2 class="t" style="left:107.45px;top:248.94px;font-size:18.9px;letter-spacing:0.363px;color:#123f8e;font-weight:400;font-style:normal;-webkit-text-stroke:0.55px #123f8e;transform:scaleX(1.05);transform-origin:0 0;">Pembulatan Transaksi</h2>
<h2 class="t" style="left:108.00px;top:433.94px;font-size:18.9px;letter-spacing:0.586px;color:#123f8e;font-weight:400;font-style:normal;-webkit-text-stroke:0.55px #123f8e;transform:scaleX(1.05);transform-origin:0 0;">Selisih uang dikembalikan saat retur</h2>
<h2 class="t" style="left:107.20px;top:560.93px;font-size:18.9px;letter-spacing:0.044px;color:#123f8e;font-weight:400;font-style:normal;-webkit-text-stroke:0.55px #123f8e;transform:scaleX(1.05);transform-origin:0 0;">Pajak Transaksi</h2>
<h2 class="t" style="left:794.55px;top:151.94px;font-size:18.9px;letter-spacing:0.605px;color:#123f8e;font-weight:400;font-style:normal;-webkit-text-stroke:0.55px #123f8e;transform:scaleX(1.05);transform-origin:0 0;">Kategori Barang</h2>
<h2 class="t" style="left:794.95px;top:320.94px;font-size:18.9px;letter-spacing:0.524px;color:#123f8e;font-weight:400;font-style:normal;-webkit-text-stroke:0.55px #123f8e;transform:scaleX(1.05);transform-origin:0 0;">Pencatatan Accurate Online</h2>
<label class="t" style="left:127.75px;top:199.34px;font-size:14.9px;letter-spacing:0.304px;color:#1c1c1c;font-weight:400;font-style:normal;">Akun Pembayaran</label>
<label class="t" style="left:127.75px;top:296.33px;font-size:14.9px;letter-spacing:0.167px;color:#1c1c1c;font-weight:400;font-style:normal;">Tipe</label>
<label class="t" style="left:127.75px;top:383.33px;font-size:14.9px;letter-spacing:0.418px;color:#1c1c1c;font-weight:400;font-style:normal;">Akun Pembulatan</label>
<label class="t" style="left:127.75px;top:510.33px;font-size:14.9px;letter-spacing:0.193px;color:#1c1c1c;font-weight:400;font-style:normal;">Akun Pencatatan Selisih</label>
<label class="t" style="left:127.00px;top:607.34px;font-size:14.9px;letter-spacing:-0.25px;color:#1c1c1c;font-weight:400;font-style:normal;">Pajak</label>
<label class="t" style="left:814.60px;top:229.34px;font-size:14.9px;letter-spacing:0.379px;color:#1c1c1c;font-weight:400;font-style:normal;">Kategori Barang</label>
<label class="t" style="left:814.00px;top:272.33px;font-size:14.9px;letter-spacing:0.4px;color:#1c1c1c;font-weight:400;font-style:normal;">Gudang Stok</label>
<span class="t" style="left:393.75px;top:197.91px;font-size:15.4px;letter-spacing:0.194px;color:#c4c4c4;font-weight:400;font-style:normal;">Cari/Pilih Akun Perkiraan...</span>
<span class="t" style="left:393.75px;top:382.91px;font-size:15.4px;letter-spacing:0.194px;color:#c4c4c4;font-weight:400;font-style:normal;">Cari/Pilih Akun Perkiraan...</span>
<span class="t" style="left:393.75px;top:509.91px;font-size:15.4px;letter-spacing:0.194px;color:#c4c4c4;font-weight:400;font-style:normal;">Cari/Pilih Akun Perkiraan...</span>
<span class="t" style="left:1081.25px;top:270.91px;font-size:15.4px;letter-spacing:0.208px;color:#c4c4c4;font-weight:400;font-style:normal;">Cari/Pilih...</span>
<span class="t" style="left:391.50px;top:296.91px;font-size:15.4px;letter-spacing:0.189px;color:#111;font-weight:400;font-style:normal;">Pembulatan ke bawah</span>
<span class="t" style="left:391.25px;top:340.91px;font-size:15.4px;letter-spacing:0.27px;color:#111;font-weight:400;font-style:normal;">Satuan</span>
<span class="t" style="left:1079.00px;top:228.91px;font-size:15.4px;letter-spacing:0.123px;color:#111;font-weight:400;font-style:normal;">Semua Kategori</span>
<label class="t" style="left:413.50px;top:608.34px;font-size:14.9px;letter-spacing:0.343px;color:#1c1c1c;font-weight:400;font-style:normal;">Total transaksi sudah termasuk pajak</label>
<em class="t" style="left:388.75px;top:632.21px;font-size:12.7px;letter-spacing:0.346px;color:#5a5a5a;font-weight:400;font-style:italic;">Outlet ini menerapkan total transaksi sudah termasuk nilai</em>
<em class="t" style="left:388.50px;top:652.21px;font-size:12.7px;letter-spacing:0.25px;color:#5a5a5a;font-weight:400;font-style:italic;">pajak</em>
<em class="t" style="left:107.90px;top:476.20px;font-size:12.7px;letter-spacing:0.314px;color:#d32424;font-weight:400;font-style:italic;">Anda dapat mengembalikan sebagian uang untuk dikembalikan</em>
<em class="t" style="left:795.25px;top:194.21px;font-size:12.7px;letter-spacing:0.349px;color:#d32424;font-weight:400;font-style:italic;">Pilih kategori barang yang dapat dijual</em>
<label class="t" style="left:838.70px;top:369.33px;font-size:14.9px;letter-spacing:0.191px;color:#1c1c1c;font-weight:400;font-style:normal;">Penjualan per Transaksi</label>
<label class="t" style="left:838.70px;top:402.33px;font-size:14.9px;letter-spacing:0.36px;color:#1c1c1c;font-weight:400;font-style:normal;">Gabung Penjualan per Kasir/Hari</label>
</body></html>
